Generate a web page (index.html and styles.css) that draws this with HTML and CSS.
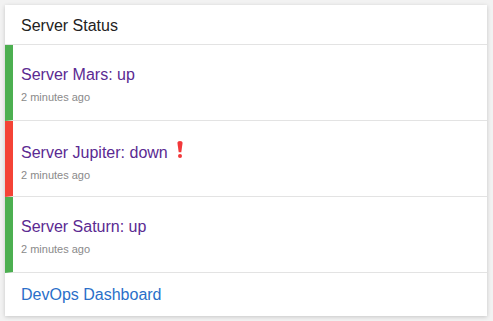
FILE: index.html
```html
<!DOCTYPE html>
<html lang="en">
<head>
  <meta charset="UTF-8">
  <title>Server Status</title>
  <link rel="stylesheet" href="styles.css">
</head>
<body>
  <div class="card">
    <div class="card-header">Server Status</div>

    <div class="status-item up">
      <div class="status-title">Server Mars: up</div>
      <div class="status-time">2 minutes ago</div>
    </div>

    <div class="status-item down">
      <div class="status-title">Server Jupiter: down<svg class="alert" width="6" height="17" viewBox="0 0 6 17"><path d="M0.4 1.8 Q0.4 0 3 0 Q5.6 0 5.6 1.8 L4.3 11.2 L1.7 11.2 Z"/><circle cx="3" cy="14.9" r="2"/></svg></div>
      <div class="status-time">2 minutes ago</div>
    </div>

    <div class="status-item up">
      <div class="status-title">Server Saturn: up</div>
      <div class="status-time">2 minutes ago</div>
    </div>

    <div class="card-footer">
      <a href="#">DevOps Dashboard</a>
    </div>
  </div>
</body>
</html>
```

FILE: styles.css
```css
body {
  margin: 0;
  padding: 5px;
  background: #f2f2f2;
  font-family: "Liberation Sans", Arial, sans-serif;
}

.card {
  width: 482px;
  height: 311px;
  background: white;
  box-shadow: 0 1px 4px rgba(0, 0, 0, 0.18);
  display: flex;
  flex-direction: column;
}

.card-header {
  height: 40px;
  box-sizing: border-box;
  padding: 2px 16px 0;
  display: flex;
  align-items: center;
  font-size: 16px;
  color: #222;
  border-bottom: 1px solid #e3e3e3;
}

.status-item {
  height: 76px;
  box-sizing: border-box;
  padding: 4px 16px 0 8px;
  border-left: 8px solid #4caf50;
  border-bottom: 1px solid #e3e3e3;
  display: flex;
  flex-direction: column;
  justify-content: center;
  gap: 7px;
}

.status-item.down {
  border-left-color: #f44336;
}

.status-title {
  font-size: 16px;
  color: #5b2a92;
}

.alert {
  fill: #f2383a;
  margin-left: 9px;
  vertical-align: 0;
}

.status-time {
  font-size: 11px;
  color: #8a8a8a;
}

.card-footer {
  flex: 1;
  padding: 0 16px;
  display: flex;
  align-items: center;
}

.card-footer a {
  font-size: 16px;
  color: #2a6fc9;
  text-decoration: none;
}
```
